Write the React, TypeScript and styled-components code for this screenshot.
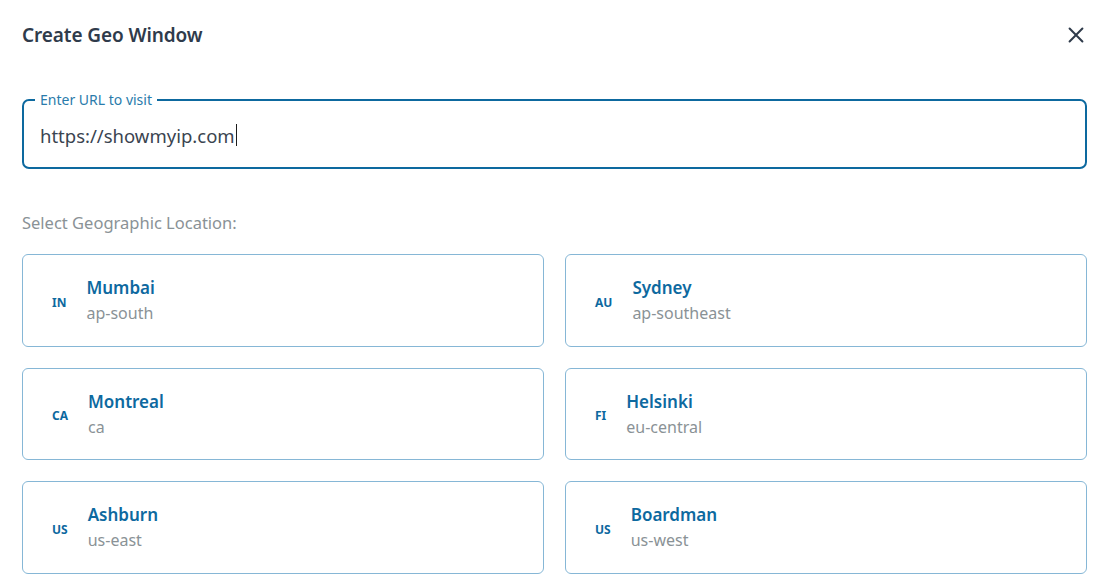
import React from 'react';
import styled, { createGlobalStyle } from 'styled-components';

const GlobalStyle = createGlobalStyle`
    body {
        margin: 0;
        background: #ffffff;
        font-family: 'Noto Sans', 'Open Sans', sans-serif;
    }
`;

const Colors = {
    title: '#2f3b4b',
    blue: '#0d699f',
    blueLabel: '#2a7bab',
    cardBorder: '#86b7d6',
    grey: '#8a9296',
    text: '#3a4450',
};

interface Location {
    code: string;
    city: string;
    region: string;
}

const LOCATIONS: Location[] = [
    { code: 'IN', city: 'Mumbai', region: 'ap-south' },
    { code: 'AU', city: 'Sydney', region: 'ap-southeast' },
    { code: 'CA', city: 'Montreal', region: 'ca' },
    { code: 'FI', city: 'Helsinki', region: 'eu-central' },
    { code: 'US', city: 'Ashburn', region: 'us-east' },
    { code: 'US', city: 'Boardman', region: 'us-west' },
];

const Dialog = styled.div`
    width: 1110px;
    box-sizing: border-box;
    padding: 18px 23px 0 22px;
`;

const Header = styled.div`
    display: flex;
    align-items: center;
    justify-content: space-between;
    height: 34px;
`;

const Title = styled.h2`
    margin: 0;
    font-size: 19px;
    font-weight: 600;
    color: ${Colors.title};
    letter-spacing: -0.1px;
`;

const CloseButton = styled.button`
    display: flex;
    align-items: center;
    justify-content: center;
    border: none;
    background: none;
    padding: 0;
    cursor: pointer;
    color: ${Colors.title};
`;

const UrlField = styled.fieldset`
    margin: 40px 0 0;
    padding: 0 16px 0 11px;
    height: 77px;
    box-sizing: border-box;
    border: 2px solid ${Colors.blue};
    border-radius: 7px;
    display: flex;
    align-items: center;
`;

const Legend = styled.legend`
    padding: 0 5px;
    font-size: 14px;
    line-height: 16px;
    color: ${Colors.blueLabel};
`;

const UrlText = styled.div`
    padding-left: 5px;
    margin-top: -5px;
    font-size: 18.5px;
    color: ${Colors.text};
    display: flex;
    align-items: center;
`;

const Caret = styled.span`
    display: inline-block;
    width: 1px;
    height: 22px;
    background: #1c1c1c;
    margin-left: 1px;
`;

const SectionLabel = styled.div`
    margin-top: 42px;
    font-size: 16.5px;
    color: ${Colors.grey};
`;

const Grid = styled.div`
    margin-top: 20px;
    display: grid;
    grid-template-columns: 1fr 1fr;
    column-gap: 21px;
    row-gap: 21px;
`;

const Card = styled.div`
    height: 92.5px;
    box-sizing: border-box;
    border: 1px solid ${Colors.cardBorder};
    border-radius: 6px;
    display: flex;
    align-items: center;
    padding: 0 0 0 29px;
    gap: 20px;
    cursor: pointer;
`;

const Code = styled.span`
    font-size: 12px;
    font-weight: 700;
    color: ${Colors.blue};
    margin-top: 4px;
`;

const Info = styled.div`
    display: flex;
    flex-direction: column;
    gap: 2px;
`;

const City = styled.span`
    font-size: 17px;
    font-weight: 600;
    color: ${Colors.blue};
    line-height: 24px;
`;

const Region = styled.span`
    font-size: 16px;
    color: ${Colors.grey};
    line-height: 22px;
`;

const LocationCard = ({ code, city, region }: Location): JSX.Element => (
    <Card>
        <Code>{code}</Code>
        <Info>
            <City>{city}</City>
            <Region>{region}</Region>
        </Info>
    </Card>
);

const App = (): JSX.Element => (
    <>
        <GlobalStyle />
        <Dialog>
            <Header>
                <Title>Create Geo Window</Title>
                <CloseButton aria-label="Close">
                    <svg width="22" height="22" viewBox="0 0 24 24" fill="none">
                        <path
                            d="M5 5L19 19M19 5L5 19"
                            stroke="currentColor"
                            strokeWidth="2.2"
                            strokeLinecap="round"
                        />
                    </svg>
                </CloseButton>
            </Header>
            <UrlField>
                <Legend>Enter URL to visit</Legend>
                <UrlText>
                    https://showmyip.com
                    <Caret />
                </UrlText>
            </UrlField>
            <SectionLabel>Select Geographic Location:</SectionLabel>
            <Grid>
                {LOCATIONS.map(loc => (
                    <LocationCard key={loc.city} {...loc} />
                ))}
            </Grid>
        </Dialog>
    </>
);

export default App;
